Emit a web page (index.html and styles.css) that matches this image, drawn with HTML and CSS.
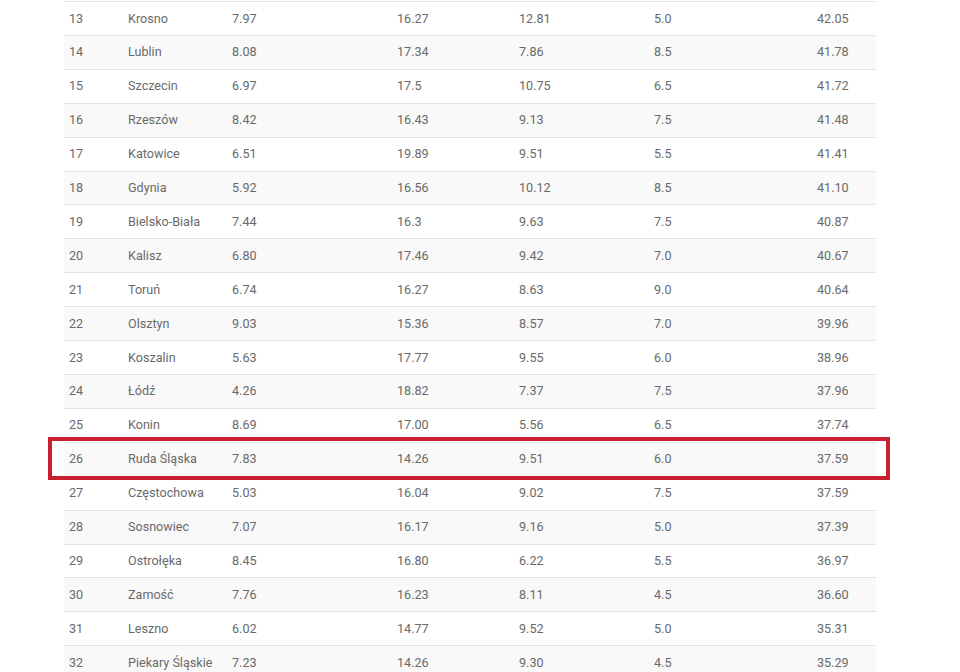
FILE: index.html
```html
<!DOCTYPE html>
<html lang="pl">
<head>
<meta charset="utf-8">
<title>Ranking miast</title>
<link rel="stylesheet" href="styles.css">
</head>
<body>
<div class="wrap">
  <table class="ranking">
    <colgroup>
      <col class="c1"><col class="c2"><col class="c3"><col class="c4"><col class="c5"><col class="c6"><col class="c7">
    </colgroup>
    <tbody>
      <tr><td>13</td><td>Krosno</td><td>7.97</td><td>16.27</td><td>12.81</td><td>5.0</td><td>42.05</td></tr>
      <tr><td>14</td><td>Lublin</td><td>8.08</td><td>17.34</td><td>7.86</td><td>8.5</td><td>41.78</td></tr>
      <tr><td>15</td><td>Szczecin</td><td>6.97</td><td>17.5</td><td>10.75</td><td>6.5</td><td>41.72</td></tr>
      <tr><td>16</td><td>Rzeszów</td><td>8.42</td><td>16.43</td><td>9.13</td><td>7.5</td><td>41.48</td></tr>
      <tr><td>17</td><td>Katowice</td><td>6.51</td><td>19.89</td><td>9.51</td><td>5.5</td><td>41.41</td></tr>
      <tr><td>18</td><td>Gdynia</td><td>5.92</td><td>16.56</td><td>10.12</td><td>8.5</td><td>41.10</td></tr>
      <tr><td>19</td><td>Bielsko-Biała</td><td>7.44</td><td>16.3</td><td>9.63</td><td>7.5</td><td>40.87</td></tr>
      <tr><td>20</td><td>Kalisz</td><td>6.80</td><td>17.46</td><td>9.42</td><td>7.0</td><td>40.67</td></tr>
      <tr><td>21</td><td>Toruń</td><td>6.74</td><td>16.27</td><td>8.63</td><td>9.0</td><td>40.64</td></tr>
      <tr><td>22</td><td>Olsztyn</td><td>9.03</td><td>15.36</td><td>8.57</td><td>7.0</td><td>39.96</td></tr>
      <tr><td>23</td><td>Koszalin</td><td>5.63</td><td>17.77</td><td>9.55</td><td>6.0</td><td>38.96</td></tr>
      <tr><td>24</td><td>Łódź</td><td>4.26</td><td>18.82</td><td>7.37</td><td>7.5</td><td>37.96</td></tr>
      <tr><td>25</td><td>Konin</td><td>8.69</td><td>17.00</td><td>5.56</td><td>6.5</td><td>37.74</td></tr>
      <tr><td>26</td><td>Ruda Śląska</td><td>7.83</td><td>14.26</td><td>9.51</td><td>6.0</td><td>37.59</td></tr>
      <tr><td>27</td><td>Częstochowa</td><td>5.03</td><td>16.04</td><td>9.02</td><td>7.5</td><td>37.59</td></tr>
      <tr><td>28</td><td>Sosnowiec</td><td>7.07</td><td>16.17</td><td>9.16</td><td>5.0</td><td>37.39</td></tr>
      <tr><td>29</td><td>Ostrołęka</td><td>8.45</td><td>16.80</td><td>6.22</td><td>5.5</td><td>36.97</td></tr>
      <tr><td>30</td><td>Zamość</td><td>7.76</td><td>16.23</td><td>8.11</td><td>4.5</td><td>36.60</td></tr>
      <tr><td>31</td><td>Leszno</td><td>6.02</td><td>14.77</td><td>9.52</td><td>5.0</td><td>35.31</td></tr>
      <tr><td>32</td><td>Piekary Śląskie</td><td>7.23</td><td>14.26</td><td>9.30</td><td>4.5</td><td>35.29</td></tr>
    </tbody>
  </table>
  <div class="highlight"></div>
</div>
</body>
</html>
```
FILE: styles.css
```css
html, body {
  margin: 0;
  padding: 0;
  background: #ffffff;
}
body {
  font-family: Roboto, "Liberation Sans", sans-serif;
  font-size: 12.6px;
  color: #6a6a6a;
  overflow: hidden;
}
.wrap {
  position: relative;
  width: 812px;
  margin-left: 64px;
  padding-top: 1px;
}
.ranking {
  width: 812px;
  border-collapse: collapse;
  table-layout: fixed;
}
.c1 { width: 59px; }
.c2 { width: 104px; }
.c3 { width: 165px; }
.c4 { width: 122px; }
.c5 { width: 135px; }
.c6 { width: 163px; }
.c7 { width: 64px; }
.ranking td {
  border-top: 1px solid #e3e3e3;
  padding: 8.5px 0 7.5px 5px;
  line-height: 16.9px;
  height: 16.9px;
  white-space: nowrap;
  vertical-align: middle;
}
.ranking tr:nth-child(even) td {
  background: #f9f9f9;
}
.highlight {
  position: absolute;
  left: -16px;
  top: 437px;
  width: 834px;
  height: 35px;
  border: 4px solid #c8202f;
  pointer-events: none;
}
```
